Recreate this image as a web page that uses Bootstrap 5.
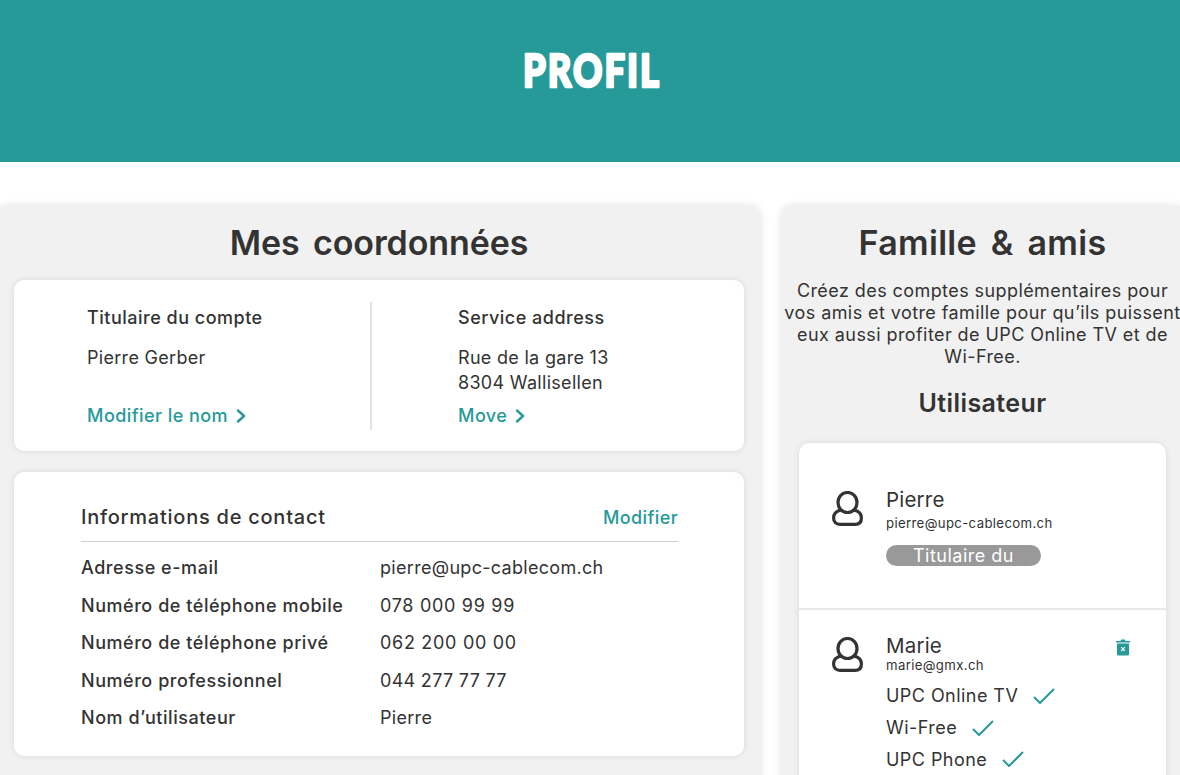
<!DOCTYPE html>
<html lang="fr">
<head>
<meta charset="utf-8">
<title>Profil</title>
<link href="https://cdn.jsdelivr.net/npm/bootstrap@5.3.0/dist/css/bootstrap.min.css" rel="stylesheet">
<style>
html,body{height:775px;overflow:hidden}
body{font-family:"Inter","Liberation Sans",sans-serif;color:#333;background:#fff;font-size:18px;line-height:25px;letter-spacing:.3px}
.hero-band{height:162px;background:#259a99;padding-top:44px}
.hero-title{margin:0;height:54px;line-height:54px;letter-spacing:0}
.hero-svg{display:block;margin:0 auto;overflow:visible}
.hero-text{font-family:"Lato",sans-serif;font-weight:900;font-size:46px;letter-spacing:2.5px;fill:#fff;stroke:#fff;stroke-width:2.6px;stroke-linejoin:round;stroke-linecap:round}
.columns{margin-left:-2px;margin-top:44px;gap:22px;width:1186px}
.panel{background:#f1f1f1;border-radius:10px;box-shadow:0 0 8px rgba(0,0,0,.13);padding:0 16px;height:640px}
.panel-left{width:762px;flex:none}
.panel-right{width:402px;flex:none;padding:0 18px 0 17px}
.panel-title{font-size:34px;font-weight:600;line-height:40px;padding-top:17px;margin:0 0 17px;letter-spacing:-.1px;word-spacing:5px;color:#333}
.panel-right .panel-title{letter-spacing:.3px}
.tile{background:#fff;border-radius:10px;box-shadow:0 0 6px rgba(0,0,0,.1)}
.tile-account{height:171px;padding:22px 0;margin-bottom:21px}
.acc-col{width:356px;padding-left:73px;height:128px;flex:none}
.acc-col+.acc-col{width:374px;border-left:2px solid #e2e2e2;padding-left:86px}
.acc-head{font-weight:500;height:30px;padding-top:3px;letter-spacing:.5px}
.acc-text{margin-top:13px;height:58px}
.teal-link{color:#259a99;text-decoration:none;font-weight:500;letter-spacing:.45px}
.tile-contact{height:284px;padding:33px 66px 0 67px}
.contact-head{border-bottom:1px solid #cfcfcf;height:37px;font-size:20px;font-weight:500;margin-bottom:7px;letter-spacing:.75px}
.contact-head .teal-link{font-size:18px;letter-spacing:.4px}
.contact-row{height:37.5px;display:flex;align-items:center}
.contact-label{width:299px;font-weight:500;letter-spacing:.55px}
.tel-wide{letter-spacing:.7px}
.intro{line-height:22px;margin:0 -16px;text-align:center;white-space:nowrap;letter-spacing:.42px}
.sub-title{font-size:25px;font-weight:600;line-height:30px;margin:20px 0 25px;letter-spacing:.4px}
.tile-users{height:400px}
.user-row{display:flex;padding:0 34px 0 33px;position:relative}
.user-a{height:167px;padding-top:45px;border-bottom:2px solid #e8e8e8}
.user-b{padding-top:24px}
.user-ic{width:31px;height:35px;margin-top:3px;flex:none}
.user-body{margin-left:23px;flex:1}
.user-name{font-size:20.5px;line-height:24px;letter-spacing:.2px}
.user-mail{font-size:13.2px;line-height:22px;letter-spacing:.35px}
.mail-tight{margin-top:-4px;margin-bottom:4px}
.pill-owner{background:#999;color:#fff;border-radius:11px;width:155px;height:21px;line-height:21px;text-align:center;margin-top:11px;letter-spacing:.5px}
.svc{height:31.7px;display:flex;align-items:center;gap:15px;letter-spacing:.45px}
.trash{position:absolute;right:36px;top:29px;width:14px;height:17px}
</style>
</head>
<body>
<header class="hero-band text-center"><h1 class="hero-title"><svg class="hero-svg" width="300" height="54" viewBox="0 0 300 54"><g transform="translate(152 0) scale(.79 1)"><text class="hero-text" x="0" y="43" text-anchor="middle">PROFIL</text></g></svg></h1></header>
<main class="d-flex columns">
  <section class="panel panel-left">
    <h2 class="panel-title text-center">Mes coordonnées</h2>
    <div class="tile tile-account d-flex">
      <div class="acc-col">
        <div class="acc-head">Titulaire du compte</div>
        <div class="acc-text">Pierre Gerber</div>
        <a class="teal-link d-inline-flex align-items-center gap-2" href="#">Modifier le nom
          <svg width="10" height="14" viewBox="0 0 10 14" fill="none" stroke="#259a99" stroke-width="2.4" stroke-linecap="round" stroke-linejoin="round"><path d="M2 1.500 8 7l-6 5.500"/></svg></a>
      </div>
      <div class="acc-col">
        <div class="acc-head">Service address</div>
        <div class="acc-text">Rue de la gare 13<br>8304 Wallisellen</div>
        <a class="teal-link d-inline-flex align-items-center gap-2" href="#">Move
          <svg width="10" height="14" viewBox="0 0 10 14" fill="none" stroke="#259a99" stroke-width="2.4" stroke-linecap="round" stroke-linejoin="round"><path d="M2 1.500 8 7l-6 5.500"/></svg></a>
      </div>
    </div>
    <div class="tile tile-contact">
      <div class="contact-head d-flex justify-content-between"><span>Informations de contact</span><a class="teal-link" href="#">Modifier</a></div>
      <div class="contact-row"><span class="contact-label">Adresse e-mail</span><span>pierre@upc-cablecom.ch</span></div>
      <div class="contact-row"><span class="contact-label">Numéro de téléphone mobile</span><span class="tel-wide">078 000 99 99</span></div>
      <div class="contact-row"><span class="contact-label">Numéro de téléphone privé</span><span class="tel-wide">062 200 00 00</span></div>
      <div class="contact-row"><span class="contact-label">Numéro professionnel</span><span>044 277 77 77</span></div>
      <div class="contact-row"><span class="contact-label">Nom d’utilisateur</span><span>Pierre</span></div>
    </div>
  </section>
  <section class="panel panel-right">
    <h2 class="panel-title text-center">Famille &amp; amis</h2>
    <p class="intro">Créez des comptes supplémentaires pour<br>vos amis et votre famille pour qu’ils puissent<br>eux aussi profiter de UPC Online TV et de<br>Wi-Free.</p>
    <h3 class="sub-title text-center">Utilisateur</h3>
    <div class="tile tile-users">
      <div class="user-row user-a">
        <svg class="user-ic" viewBox="0 0 31 35" fill="none" stroke="#333" stroke-width="3.200"><ellipse cx="15.500" cy="11.500" rx="9.500" ry="10"/><path d="M9 19C4.500 20 1.600 22.500 1.600 27c0 4 2.500 6.400 6.400 6.400h15c4 0 6.400-2.400 6.400-6.400 0-4.500-2.900-7-7.400-8"/></svg>
        <div class="user-body">
          <div class="user-name">Pierre</div>
          <div class="user-mail">pierre@upc-cablecom.ch</div>
          <div class="pill-owner">Titulaire du</div>
        </div>
      </div>
      <div class="user-row user-b">
        <svg class="user-ic" viewBox="0 0 31 35" fill="none" stroke="#333" stroke-width="3.200"><ellipse cx="15.500" cy="11.500" rx="9.500" ry="10"/><path d="M9 19C4.500 20 1.600 22.500 1.600 27c0 4 2.500 6.400 6.400 6.400h15c4 0 6.400-2.400 6.400-6.400 0-4.500-2.900-7-7.400-8"/></svg>
        <div class="user-body">
          <div class="user-name">Marie</div>
          <div class="user-mail mail-tight">marie@gmx.ch</div>
          <div class="svc">UPC Online TV <svg width="22" height="16" viewBox="0 0 22 16" fill="none" stroke="#259a99" stroke-width="2"><path d="M1 9l6 6L21 1"/></svg></div>
          <div class="svc">Wi-Free <svg width="22" height="16" viewBox="0 0 22 16" fill="none" stroke="#259a99" stroke-width="2"><path d="M1 9l6 6L21 1"/></svg></div>
          <div class="svc">UPC Phone <svg width="22" height="16" viewBox="0 0 22 16" fill="none" stroke="#259a99" stroke-width="2"><path d="M1 9l6 6L21 1"/></svg></div>
        </div>
        <svg class="trash" viewBox="0 0 14 17"><path fill="#259a99" d="M0 2h4.500l.7-1.500h3.600L9.500 2H14v1.500H0ZM1 4.500h12V15a1.500 1.500 0 0 1-1.500 1.500h-9A1.500 1.500 0 0 1 1 15Z"/><path stroke="#fff" stroke-width="1.200" d="M5.200 8.200l3.600 4M8.800 8.200l-3.600 4"/></svg>
      </div>
    </div>
  </section>
</main>
<script src="https://cdn.jsdelivr.net/npm/bootstrap@5.3.0/dist/js/bootstrap.bundle.min.js"></script>
</body>
</html>
